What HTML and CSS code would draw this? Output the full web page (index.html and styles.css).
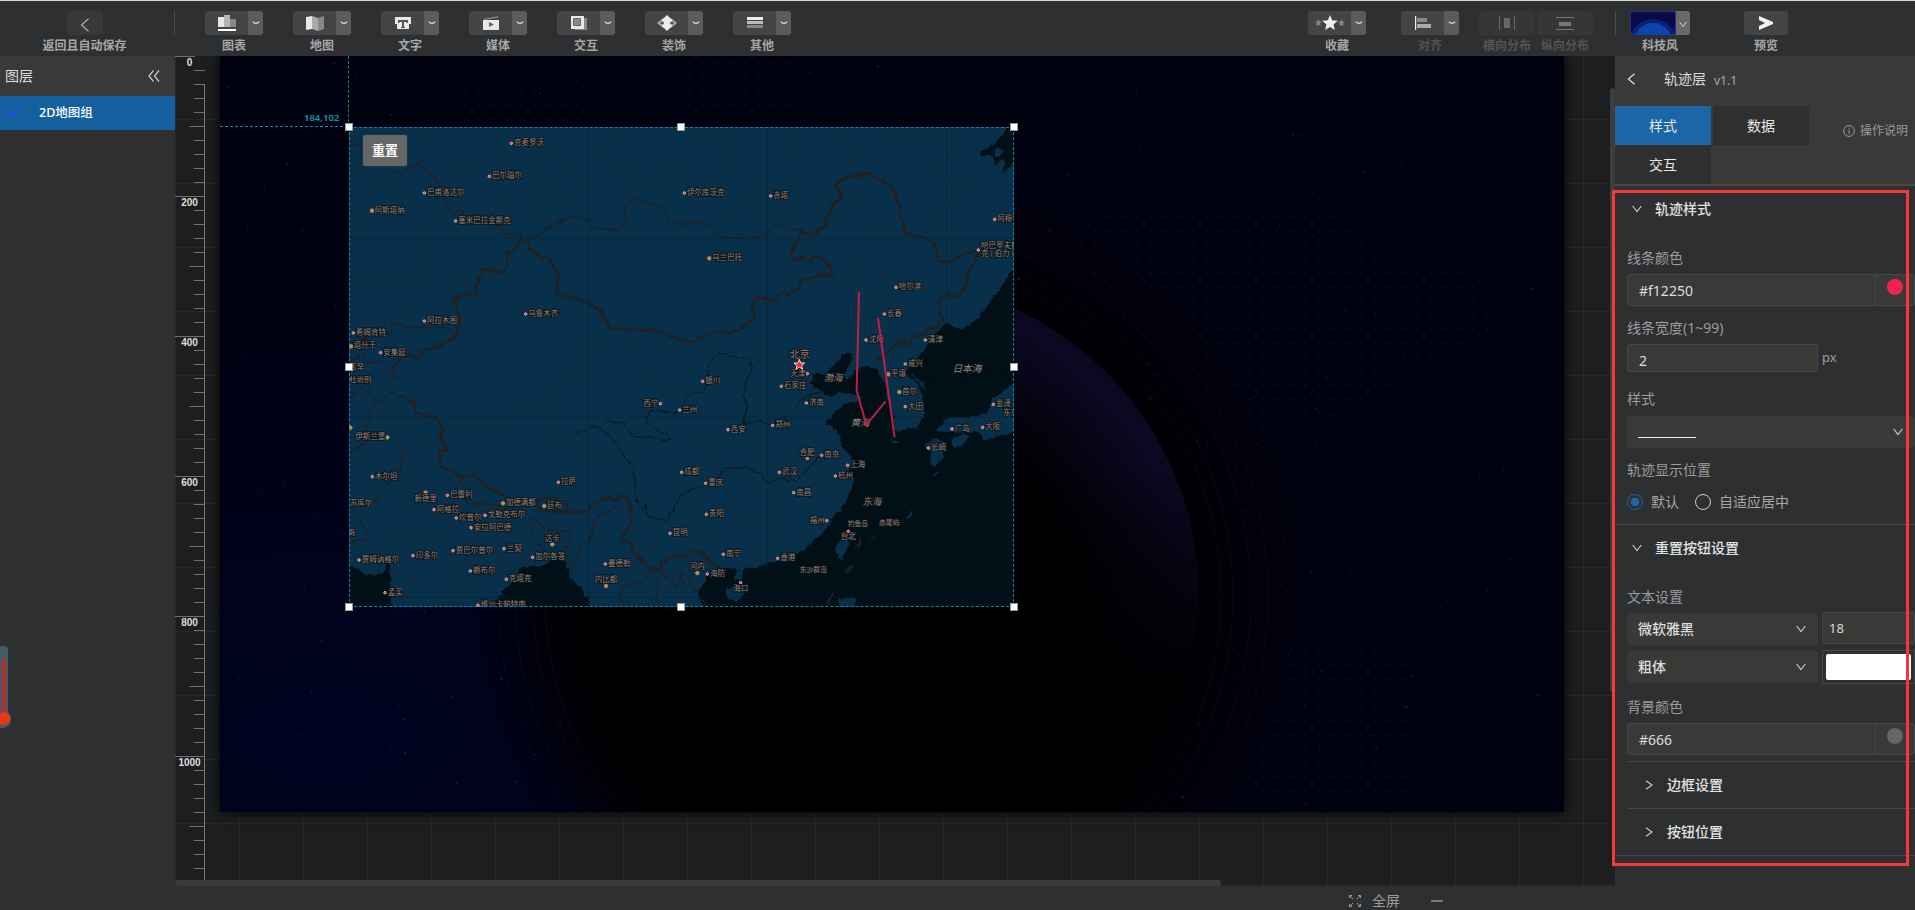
FILE: index.html
```html
<!DOCTYPE html>
<html lang="zh-CN">
<head>
<meta charset="utf-8">
<title>2D地图组</title>
<link rel="stylesheet" href="styles.css">
</head>
<body>
<svg class="defs" width="0" height="0">
  <symbol id="down" viewBox="0 0 10 8"><path d="M.7 1 5 6.6 9.3 1" fill="none" stroke="currentColor" stroke-width="1.2"/></symbol>
  <symbol id="caret" viewBox="0 0 8 4"><path d="M.8.8 Q4 4 7.2.8" fill="none" stroke="#d8d8d8" stroke-width="1.3"/></symbol>
</svg>
<div class="app">
  <header class="toolbar">
    <div class="back-zone"><div class="tool back"><span class="btn single"><svg width="10" height="14" viewBox="0 0 10 14"><path d="M8.5.8 1.5 7l7 6.2" fill="none" stroke="#aaa" stroke-width="1.3"/></svg></span><b>返回且自动保存</b></div></div>
    <div class="group">
      <div class="tool"><span class="btn"><i><svg width="18" height="18"><path fill="#e8e8e8" d="M0 3h6v10H0z"/><path fill="#b5b5b5" d="M6 1h6v12H6z"/><path fill="#888" d="M12 5h6v8h-6z"/><path fill="#fff" d="M0 15h18v2H0z"/></svg></i><u><svg width="8" height="4"><use href="#caret"/></svg></u></span><b>图表</b></div>
      <div class="tool"><span class="btn"><i><svg width="18" height="16"><path fill="#e8e8e8" d="m0 2 6-1v13l-6 1z"/><path fill="#aaa" d="m6 1 6 2v13l-6-2z"/><path fill="#888" d="m12 3 6-2v13l-6 2z"/></svg></i><u><svg width="8" height="4"><use href="#caret"/></svg></u></span><b>地图</b></div>
      <div class="tool"><span class="btn"><i><svg width="16" height="14"><path fill="#e8e8e8" d="M0 1h16v7H0zM2 8h12v5H2z"/><path fill="#555" d="M3 4h10v3h-1l-1-1H9v5h1v1H6v-1h1V6H5L4 7H3z"/></svg></i><u><svg width="8" height="4"><use href="#caret"/></svg></u></span><b>文字</b></div>
      <div class="tool"><span class="btn"><i><svg width="16" height="14"><path stroke="#999" d="M1 3.5 15.500.8"/><path fill="#e8e8e8" d="M0 4h16v10H0z"/><path fill="#666" d="m6 6 5 2.500-5 2.500z"/></svg></i><u><svg width="8" height="4"><use href="#caret"/></svg></u></span><b>媒体</b></div>
      <div class="tool"><span class="btn"><i><svg width="16" height="14"><path fill="#888" d="M4 2h12v12H4z"/><path fill="#e8e8e8" d="M0 0h13v13H0z"/><path fill="#888" stroke="#666" d="M2.500 2.500h7v7h-7z"/></svg></i><u><svg width="8" height="4"><use href="#caret"/></svg></u></span><b>交互</b></div>
      <div class="tool"><span class="btn"><i><svg width="20" height="16"><path fill="none" stroke="#aaa" stroke-width="2" d="M7 3.500 1.500 8 7 12.500M13 3.500 18.500 8 13 12.500"/><path fill="#eee" d="m10 0 2 2 3 3v6l-3 3-2 2-2-2-3-3V5l3-3z"/><circle cx="5.500" cy="8" r="1.500" fill="#555"/><circle cx="14.500" cy="8" r="1.500" fill="#555"/></svg></i><u><svg width="8" height="4"><use href="#caret"/></svg></u></span><b>装饰</b></div>
      <div class="tool"><span class="btn"><i><svg width="16" height="12"><path fill="#eee" d="M0 0h16v3H0z"/><path fill="#bbb" d="M0 4h16v3H0z"/><path fill="#888" d="M0 8h16v3H0z"/></svg></i><u><svg width="8" height="4"><use href="#caret"/></svg></u></span><b>其他</b></div>
    </div>
    <div class="group right">
      <div class="tool fav"><span class="btn"><i><svg width="30" height="16" viewBox="0 0 30 16"><path fill="#eee" d="m15 0 2.200 5.300 5.600.4-4.300 3.700 1.400 5.600-4.900-3-4.900 3 1.400-5.600-4.300-3.700 5.600-.4z"/><path fill="#888" d="m3.500 4 1 2.500 2.500.3-2 1.700.6 2.700-2.100-1.400-2.200 1.400.6-2.700-1.900-1.700 2.500-.3zM26.500 4l1 2.500 2.500.3-2 1.700.6 2.700-2.100-1.400-2.200 1.400.6-2.700-1.900-1.700 2.500-.3z"/></svg></i><u><svg width="8" height="4"><use href="#caret"/></svg></u></span><b>收藏</b></div>
      <div class="tool align"><span class="btn"><i><svg width="16" height="14"><path fill="#eee" d="M0 0h1.200v14H0z"/><path fill="#888" d="M2 2h10v4H2z"/><path fill="#aaa" d="M2 8h14v4H2z"/></svg></i><u><svg width="8" height="4"><use href="#caret"/></svg></u></span><b>对齐</b></div>
      <div class="tool dist"><span class="btn single"><svg width="16" height="14"><path fill="#666" d="M0 0h1v14H0zM5 2h6v10H5zM15 0h1v14h-1z"/></svg></span><b>横向分布</b></div>
      <div class="tool dist2"><span class="btn single"><svg width="18" height="13"><path fill="#777" d="M0 0h18v1H0zM3 5h12v4H3zM0 12h18v1H0z"/></svg></span><b>纵向分布</b></div>
      <span class="rule"></span>
      <div class="tool theme"><span class="btn"><em><svg width="45" height="23"><circle cx="22" cy="31" r="24" fill="#10349a" opacity=".5"/><circle cx="22" cy="30" r="19" fill="#0b45b0"/></svg></em><u><svg width="8" height="7" color="#ddd"><use href="#down"/></svg></u></span><b>科技风</b></div>
      <div class="tool preview"><span class="btn single"><svg width="14" height="14"><path fill="#f2f2f2" d="m0 0 14 6v2L0 14v-4l6-3-6-3z"/></svg></span><b>预览</b></div>
    </div>
  </header>

  <aside class="layers">
    <h2>图层<svg width="12" height="12" viewBox="0 0 12 12"><path d="M5.500.5 1 6l4.500 5.500M11 .5 6.500 6l4.500 5.500" fill="none" stroke="#ccc" stroke-width="1.200"/></svg></h2>
    <div class="layer"><svg width="14" height="12"><path d="M0 4 3 5l2 1 3-2 2-4 3 1-1 3-2 1-1 4-4 1-3-3z" fill="#2350d4"/></svg>2D地图组</div>
    <svg class="thermo" width="14" height="82"><path d="M-1 0h5a4 4 0 0 1 4 4v62a9.500 9.500 0 0 1-4 16h-5z" fill="#455a64"/><path d="M2.500 13h3v60h-3z" fill="#d02018"/><circle cx="4" cy="72.500" r="6.500" fill="#e23a14"/></svg>
  </aside>

  <main class="canvas">
    <div class="screen"><svg class="space" id="space" width="1344" height="756"></svg></div>
    <div class="ruler"><svg id="ruler" width="30" height="824"></svg></div>
    <span class="guide-v"></span><span class="guide-h"></span><span class="coord">184,102</span>
    <div class="widget">
      <svg id="map" width="665" height="480" viewBox="27 21 1995 1440">
        <defs><filter id="rough" x="0" y="0" width="1" height="1" filterUnits="objectBoundingBox" color-interpolation-filters="sRGB"><feTurbulence type="fractalNoise" baseFrequency=".06" numOctaves="2" seed="4"/><feDisplacementMap in="SourceGraphic" scale="16" xChannelSelector="R" yChannelSelector="G"/></filter></defs>
        <path fill="#08304a" d="M0 0h2100v1500H0z"/>
        <g filter="url(#rough)">
          <path fill="#08304a" d="M0 0h2100v1500H0z"/>
          <g class="sea">
            <path d="M2050 520 2015 565 1985 620 1950 665 1920 710 1880 740 1850 747 1820 725 1805 745 1782 760 1757 775 1755 810 1710 760 1685 765 1710 770 1735 795 1752 840 1752 885 1730 925 1675 932 1665 930 1660 880 1642 835 1640 800 1620 770 1612 745 1580 738 1550 748 1520 782 1508 765 1540 720 1535 700 1515 700 1495 725 1470 745 1460 765 1420 762 1412 790 1430 805 1450 812 1452 825 1480 828 1500 815 1540 822 1570 838 1520 850 1500 865 1470 890 1458 910 1480 925 1500 950 1508 985 1530 1005 1542 1030 1525 1055 1540 1075 1535 1105 1515 1150 1500 1170 1475 1200 1460 1225 1420 1265 1390 1290 1360 1310 1310 1325 1250 1340 1215 1345 1205 1375 1185 1385 1188 1345 1130 1345 1100 1370 1075 1420 1095 1490H2100z"/>
            <path d="M1757 775 1755 690 1782 640 1805 625 1820 605 1850 627 1880 620 1920 590 1950 545 1985 500 2050 400V760z"/>
            <path d="M1755 690 1710 740 1685 765 1712 760 1770 800z"/>
            <path d="M2050 0h-45l-15 40-30 35-40 20 5 13h35l5 30 20-20 12 8-10 35 60-60z"/>
            <path d="M0 1330 50 1345 75 1365 110 1365 135 1355 143 1325 152 1360 150 1410 162 1490H0zM450 1475 490 1410 540 1370 535 1350 570 1335 600 1340 640 1320 675 1322 690 1370 720 1400 745 1440 755 1480z"/>
          </g>
          <g fill="#08304a">
            <path d="M1180 1400 1215 1397 1210 1425 1190 1445 1160 1435 1157 1410zM1520 1255 1528 1265 1505 1328 1485 1290 1490 1270zM1495 1480 1495 1435 1545 1435 1545 1480zM1755 975 1780 955 1815 965 1810 1010 1785 1042 1768 1030 1775 1000zM1788 935 1820 895 1900 890 1940 880 1960 835 2050 770 2050 930 1980 945 1930 962 1925 940 1890 935zM1835 960 1870 940 1890 945 1870 975 1840 985z"/>
            <ellipse cx="1665" cy="965" rx="11" ry="6"/><path d="m1700 1190 20-20-2 15-15 15zM1588 1257l18-5-5 6zM1779 1065l12-14 3 6-10 12zM1734 987l14-2zM1965 88l15-6 8 12-12 16-12-4z"/>
          </g>
          <g class="thin dash">
            <path d="M28 160 70 158 100 180 160 180 170 250 80 295 40 325M170 120 175 180M160 210 230 215M250 470 265 350 250 340 300 270 360 235M28 495 170 497 200 470 275 468 270 440 400 490 410 520M170 497 180 550 230 600M205 40 280 30M435 30 470 50 490 120 425 130 360 125 320 165M480 120 530 130 520 220 430 280M600 90 650 90 665 150 640 220 600 240 590 180zM570 230 610 300 610 330M820 40 785 120 850 130 880 180 1040 140 1030 200 880 180M750 170 700 230 640 235M980 140 1050 150"/>
            <path d="M1040 60 1170 50 1150 160 1110 180 1040 300M1365 30 1370 80 1390 100 1310 160 1310 200 1160 250 1150 330M1260 280 1300 250 1360 260 1340 300zM1485 40 1530 80 1530 160 1510 190 1550 220 1570 270 1620 320 1630 370 1560 430 1570 500 1620 525 1730 550 1790 590M1610 30 1650 60 1850 70 1785 150 1820 180 1900 170 1890 220 1810 250 1790 340 1900 390"/>
            <path d="M230 945 310 950 370 890 500 890 650 870 655 830 630 780 720 760 720 700 790 660 850 640 890 720M620 865 620 950 710 980 800 1015 840 980 860 940 1000 990M890 720 980 840 1100 800 1250 660 1320 720 1310 790 1420 660 1500 630 1560 500M1060 730 1020 680M130 860 260 905 235 980 190 990 165 930zM205 1000 270 975 330 1000M150 1230 300 1250 400 1190 560 1270 500 1330 380 1400 270 1440M400 1220 360 1380 350 1440M580 1210 680 1330 610 1280M1040 1060 1160 1110 1190 1220 1310 1190 1310 1260 1250 1330M1170 780 1310 880 1230 970 1290 1040 1400 1000 1430 1120 1490 1140M1310 1190 1300 1100 1370 1060 1510 1090M1050 940 1160 990 1270 950M1380 820 1460 940M1130 1060 1130 1010 1060 980M1040 1120 1060 1240 1150 1250M1400 1140 1420 1210 1380 1280"/>
          </g>
          <g class="thin">
            <path d="M28 68 60 77 120 70M150 165 155 150 180 160 210 145 250 122 242 135 285 175 305 215 340 285 360 268 380 290 430 283 460 310 485 320 490 340 515 345 535 332 548 360 565 358 610 340 615 325 690 290 745 297 760 322 835 332 862 310 850 265 880 234 970 265 985 300 1020 315 1060 303 1100 310 1140 350 1220 358 1275 345 1310 312 1350 328 1385 332"/>
            <path d="M28 680 80 650 100 625 155 640 155 610 200 620 320 622 345 638M28 725 75 700 70 730 125 725 158 745M28 835 80 790 110 850 150 820 185 830M28 1000 75 970 90 870 110 850M28 1260 80 1262 85 1240 60 1205 30 1130M100 1145 140 1100 180 1050 185 1015 210 1000M370 1070 345 1110 390 1150 490 1155M570 1190 575 1240 620 1310M575 1190 620 1230 690 1235 675 1290 695 1360 710 1300 720 1270 745 1270 770 1190 830 1160M850 1461 835 1430 855 1400 915 1380 930 1350 950 1365 950 1440 970 1461M960 1350 1010 1400 1030 1360 1100 1460M1030 1400 1025 1350"/>
          </g>
          <g class="river"><path d="M710 937 735 932 760 917 790 930 830 975 870 1030 880 1050 885 1110 890 1145 910 1170 915 1150 925 1190 980 1202 1005 1160 1015 1135 1040 1115 1075 1105 1110 1090M1130 1080 1145 1055 1160 1044 1220 1043 1260 1060 1290 1090 1310 1075 1340 1080 1370 1080 1400 1055 1430 1015 1470 1005M800 905 850 908 880 950 930 950 965 960 995 958 970 940 925 915 917 890 930 870 1000 880 1035 862 1035 830 1090 815 1105 775 1102 740 1115 720 1140 697 1175 710 1230 715 1236 750 1215 790 1212 830 1220 860 1210 915 1250 903 1310 915 1345 880 1395 830 1450 812"/></g>
          <g class="thick"><path d="M560 360H540L528 387 502 400V440L480 457 427 446 407 505 413 523 390 520 340 538 350 550 360 605 345 652 285 684 250 690 238 712 195 708 170 725 158 745 165 778M185 828 225 850V873L258 890H285L310 930 300 950 320 990H295L305 1040 370 1070 400 1065 440 1100 500 1130M590 1145 610 1135 635 1133 668 1145 685 1175 740 1175 755 1155 790 1133 825 1140 845 1125 870 1150 875 1210 840 1260 875 1270 880 1300 905 1320 925 1340 960 1350 965 1325 1000 1310H1030L1060 1290 1085 1297 1105 1320 1135 1342M590 1145 600 1172 690 1177M560 360 570 385 600 410 630 415 655 465 648 520 660 528 725 537 760 562 778 565 808 625 900 630H955L1010 658 1035 660 1052 668 1120 635 1165 637 1200 628 1245 590 1235 560 1252 532 1300 543 1325 520H1350L1375 505 1382 483 1435 467H1478L1470 440 1440 410H1420L1405 427 1390 413 1365 422 1353 405 1370 365 1385 335 1420 345 1440 328 1460 320V300L1485 248 1502 235 1500 207 1482 200 1510 175 1580 160 1620 180 1655 195 1675 250 1680 280 1690 310 1700 343 1755 352 1785 375 1795 425H1840L1855 408 1915 392 1903 425 1885 460 1878 490 1855 533 1820 522 1795 543 1805 600 1785 625 1765 620 1755 640 1715 655 1710 675 1675 662 1655 690 1608 722M1560 1255 1552 1283M1537 1340 1515 1362M1482 1420 1465 1450"/></g>
        </g>
        <path d="M27 355h1995M27 892h1995M27 1432h1995M746 21v1440M1282 21v1440M1820 21v1440" stroke="#03202f" stroke-width="3" opacity=".5"/>
        <g id="cities"></g>
        <path d="M1378 718 1382 729 1394 729 1385 737 1388 748 1378 741 1368 748 1371 737 1362 729 1374 729z" fill="#f22" stroke="#fff" stroke-width="2.500"/>
        <path d="M1557 515 1550 812 1579 914 1637 844M1614 594 1664 952" fill="none" stroke="#c11d4b" stroke-width="6"/>
      </svg>
      <span class="reset">重置</span>
      <i class="h nw"></i><i class="h n"></i><i class="h ne"></i><i class="h w"></i><i class="h e"></i><i class="h sw"></i><i class="h s"></i><i class="h se"></i>
    </div>
    <span class="scroll-v"></span><span class="scroll-h"></span>
  </main>

  <aside class="panel">
    <div class="panel-top">
      <div class="panel-title"><svg width="9" height="12" viewBox="0 0 9 12"><path d="M7.500.8 1.500 6l6 5.200" fill="none" stroke="#ddd" stroke-width="1.300"/></svg><span>轨迹层</span><small>v1.1</small></div>
      <div class="tabs"><div class="tabset"><span class="tab on">样式</span><span class="tab">数据</span><span class="tab">交互</span></div>
        <div class="help"><svg width="12" height="12"><circle cx="6" cy="6" r="5.400" fill="none" stroke="#999"/><path d="M6 5v4M6 2.800v1.400" stroke="#999"/></svg>操作说明</div></div>
    </div>
    <section>
      <h3><svg width="10" height="8"><use href="#down"/></svg>轨迹样式</h3>
      <label class="l1">线条颜色</label>
      <div class="color"><span>#f12250</span><i><b class="red"></b></i></div>
      <label class="l2">线条宽度(1~99)</label>
      <div class="row"><span class="input num">2</span><span class="unit">px</span></div>
      <label class="l3">样式</label>
      <div class="select wide"><span class="stroke"></span><svg width="10" height="8"><use href="#down"/></svg></div>
      <label class="l4">轨迹显示位置</label>
      <div class="radios"><i class="on"></i><span>默认</span><i></i><span>自适应居中</span></div>
    </section>
    <section class="second">
      <h3><svg width="10" height="8"><use href="#down"/></svg>重置按钮设置</h3>
      <label class="l5">文本设置</label>
      <div class="row r1"><div class="select">微软雅黑<svg width="10" height="8"><use href="#down"/></svg></div><span class="input size">18</span></div>
      <div class="row r2"><div class="select">粗体<svg width="10" height="8"><use href="#down"/></svg></div><span class="swatch"><i></i></span></div>
      <label class="l6">背景颜色</label>
      <div class="color"><span>#666</span><i><b></b></i></div>
      <div class="fold first"><svg width="8" height="10"><path d="M1 .7 7 5 1 9.300" fill="none" stroke="currentColor" stroke-width="1.200"/></svg>边框设置</div>
      <div class="fold"><svg width="8" height="10"><path d="M1 .7 7 5 1 9.300" fill="none" stroke="currentColor" stroke-width="1.200"/></svg>按钮位置</div>
    </section>
  </aside>

  <footer class="status">
    <svg width="12" height="12"><path d="M.5 3V.5H3M.5.5l3.500 3.500M9 .5h2.500V3M11.500.5 8 4M.5 9v2.500H3M.5 11.500 4 8M9 11.500h2.500V9M11.500 11.500 8 8" fill="none" stroke="#999"/></svg><span>全屏</span><i></i>
  </footer>
</div>
<div class="highlight"></div>
<script src="app.js"></script>
</body>
</html>
```
FILE: styles.css
```css
* { box-sizing: border-box; }
body { margin: 0; background: #2e2f31; color: #ddd; font: 14px/20px "Noto Sans", "Noto Sans CJK SC", sans-serif; overflow: hidden; }
svg { display: block; flex: none; }
i, em { font-style: normal; }
u { text-decoration: none; }
.defs { position: absolute; }
.app { display: grid; grid-template: 56px 830px 24px / 175px 1440px 300px; width: 1915px; height: 910px; }

/* toolbar */
.toolbar { grid-column: 1 / 4; display: flex; border-top: 1px solid #d5dbd8; background: #2e2f31; padding-top: 10px; }
.back-zone { width: 175px; height: 24px; border-right: 1px solid #4b4c4e; display: flex; justify-content: center; }
.group { display: flex; margin-left: 30px; gap: 30px; }
.tool { width: 58px; display: flex; flex-direction: column; align-items: center; }
.tool > b { font-size: 12px; font-weight: 600; line-height: 20px; margin-top: 1px; color: #a6a7a7; white-space: nowrap; }
.back { width: 90px; margin-right: 5px; }
.btn { width: 100%; height: 24px; background: #434446; border-radius: 3px; display: flex; overflow: hidden; flex: none; }
.btn i { flex: 1; display: grid; place-items: center; }
.btn u { width: 15px; background: #5a5b5b; display: grid; place-items: center; }
.btn.single { justify-content: center; align-items: center; }
.back .btn { width: 36px; background: #373838; padding-top: 4px; }
.right { margin-left: 517px; gap: 0; }
.align { margin-left: 35px; }
.dist, .dist2 { width: 56px; margin-left: 20px; }
.dist2 { margin-left: 2px; }
.dist .btn, .dist2 .btn { background: #353638; }
.align > b, .dist > b, .dist2 > b { color: #535455; }
.rule { width: 1px; height: 24px; background: #4b4c4e; margin: 0 14px 0 22px; }
.theme { width: 60px; }
.btn em { width: 46px; background: #0a0a4a; border: 1px solid #24308a; border-radius: 3px; }
.theme .btn u { width: 14px; background: #68696a; padding-top: 3px; }
.preview { width: 44px; margin-left: 54px; }

/* layer list */
.layers { background: #2e2f31; position: relative; }
.layers h2 { margin: 0; height: 40px; padding: 0 15px 0 5px; background: #393a38; font: inherit; display: flex; align-items: center; justify-content: space-between; }
.layer { height: 34px; background: #14609f; color: #fff; font-size: 12.500px; font-weight: 500; display: flex; align-items: center; gap: 19px; padding-left: 6px; }
.thermo { position: absolute; left: 0; top: 590px; }

/* canvas */
.canvas { position: relative; overflow: hidden; background: #1d1e20; }
.screen { position: absolute; left: 45px; top: 0; width: 1344px; height: 756px; background: #00010f; box-shadow: 0 0 12px #000; }
.canvas::before { content: ""; position: absolute; inset: 0; background: repeating-linear-gradient(90deg, #27282a 0 1px, transparent 1px 64px), repeating-linear-gradient(#27282a 0 1px, transparent 1px 64px) 0 -1px; }
.ruler { position: absolute; left: 0; top: 0; font: bold 10px "Liberation Sans", sans-serif; }
.guide-v { position: absolute; left: 173px; top: 0; height: 71px; border-left: 1px dashed #0889a5; }
.guide-h { position: absolute; left: 45px; top: 70px; width: 128px; border-top: 1px dashed #0889a5; }
.coord { position: absolute; left: 129px; top: 54px; font: 600 9.500px/16px "Noto Sans", sans-serif; color: #0899b7; }
.widget { position: absolute; left: 174px; top: 71px; width: 665px; height: 480px; outline: 1px dashed #0889a5; outline-offset: -1px; }
.reset { position: absolute; left: 14px; top: 8px; width: 44px; height: 31px; border-radius: 2px; background: #666; color: #fff; font-weight: 700; font-size: 13px; line-height: 31px; text-align: center; box-shadow: 0 0 2px #444; }
.h { position: absolute; width: 8px; height: 8px; background: #fff; border: 1px solid #999; }
.nw, .n, .ne { top: -4px; } .w, .e { top: 236px; } .sw, .s, .se { top: 476px; }
.nw, .w, .sw { left: -4px; } .n, .s { left: 328px; } .ne, .e, .se { left: 661px; }
.scroll-v { position: absolute; right: 0; top: 32px; width: 5px; height: 604px; background: #3c3d3d; border-radius: 3px; }
.scroll-h { position: absolute; left: 0; bottom: 0; width: 1046px; height: 6px; background: #3c3c3c; border-radius: 3px; }
.sea { fill: #010f17; }
.thin { fill: none; stroke: #211f20; stroke-width: 4; }
.thin.dash { stroke-width: 3; stroke-dasharray: 6 5; stroke: #1b2932; }
.river { fill: none; stroke: #051621; stroke-width: 3; stroke-linejoin: round; }
.thick { fill: none; stroke: #211f20; stroke-width: 8; stroke-linejoin: round; }
#cities text { font-family: "Noto Sans CJK SC", sans-serif; font-size: 22.500px; fill: #8b8580; stroke: #101214; stroke-width: 5px; paint-order: stroke; }

/* property panel */
.panel { background: #2e2f31; overflow: hidden; }
.panel-top { height: 130px; background: #393a38; border-bottom: 2px solid #48494a; }
.panel-title { height: 50px; display: flex; align-items: center; padding: 0 0 4px 12px; }
.panel-title span { margin-left: 28px; }
.panel-title small { font-size: 12px; color: #aaa; margin: 4px 0 0 8px; }
.tabs { display: flex; }
.tabset { width: 194px; display: flex; flex-wrap: wrap; column-gap: 2px; }
.tab { width: 96px; height: 39px; background: #2e2f31; color: #e8e8e8; text-align: center; line-height: 39px; }
.tab.on { background: #1a66a6; }
.help { display: flex; align-items: center; gap: 5px; height: 20px; margin: 15px 0 0 34px; font-size: 12px; color: #999; white-space: nowrap; }
.panel section { padding-left: 12px; display: flex; flex-direction: column; }
.panel section > * { flex: none; }
h3 { margin: 13px 0 0 5px; font: inherit; font-weight: 500; display: flex; align-items: center; gap: 13px; height: 20px; color: #e2e2e2; }
h3 svg, .select svg, .fold svg { color: #ccc; }
label { height: 20px; color: #9b9c9c; }
.l1 { margin: 29px 0 6px; } .l2 { margin: 12px 0 6px; } .l3 { margin: 17px 0 7px; } .l4 { margin: 12px 0; }
.l5 { margin: 29px 0 6px; } .l6 { margin: 14px 0 6px; }
.color { height: 32px; width: 288px; display: flex; background: #393a38; border: 1px solid #444648; border-radius: 3px; padding-left: 11px; line-height: 31px; }
.color span { flex: 1; }
.color i { width: 39px; border-left: 1px solid #444648; padding: 4px 0 0 11px; }
.color b { display: block; width: 16px; height: 16px; border-radius: 50%; background: #666; }
.color .red { background: #f52250; }
.row { display: flex; gap: 4px; }
.input { background: #393a38; border: 1px solid #444648; border-radius: 3px; }
.num { width: 191px; height: 28px; padding-left: 11px; line-height: 32px; }
.unit { line-height: 26px; color: #9b9c9c; font-size: 13px; }
.select { width: 191px; height: 32px; background: #393a38; border-radius: 3px; display: flex; justify-content: space-between; align-items: center; padding: 0 12px 0 11px; font-weight: 500; }
.wide { width: 288px; }
.stroke { width: 58px; height: 1px; background: #eee; margin-top: 11px; }
.radios { display: flex; align-items: center; height: 20px; color: #a5a6a6; }
.radios i { width: 16px; height: 16px; border: 1px solid #ccc; border-radius: 50%; margin-right: 8px; }
.radios i.on { border-color: #1a66a6; background: radial-gradient(#1a66a6 0 4px, transparent 4.500px); }
.radios span + i { margin-left: 16px; }
.second { margin-top: 12px; border-top: 1px solid #444546; border-bottom: 1px solid #444546; }
.size { width: 93px; height: 32px; margin-top: -1px; padding-left: 6px; line-height: 30px; font-size: 13px; }
.r2 { margin-top: 6px; height: 32px; }
.swatch { width: 93px; height: 34px; margin-top: -1px; border: 1px solid #444648; padding: 3px; }
.swatch i { display: block; height: 26px; background: #fff; border-radius: 2px; }
.fold { height: 47px; border-top: 1px solid #444546; display: flex; align-items: center; gap: 14px; padding-left: 18px; color: #e2e2e2; font-weight: 500; }
.first { margin-top: 6px; }

.status { grid-column: 1 / 4; background: #2e2f31; display: flex; align-items: center; padding: 5px 0 0 1349px; color: #9b9c9c; }
.status span { margin-left: 11px; }
.status i { width: 12px; height: 2px; background: #77787a; margin-left: 31px; }
.highlight { position: absolute; left: 1612px; top: 190px; width: 297px; height: 676px; border: 3px solid #fb3638; }
```
FILE: app.js
```js
// Vertical ruler: one tick per 20 units, 0.7px per unit.
let ticks = '<path d="M29.500 28V824" stroke="#7b7c7d"/>';
for (let i = 0; i < 59; i++) {
  const y = i * 14 + 0.5;
  const x = i % 10 === 0 ? 0 : i % 5 === 0 ? 14 : 19;
  ticks += `<path d="M${x} ${y}H${i ? 30 : 20}" stroke="#707172"/>`;
  if (i % 10 === 0) ticks += `<text x="14.500" y="${y + 9.500}" fill="#ddd" text-anchor="middle">${i * 20}</text>`;
}
document.getElementById('ruler').innerHTML = ticks;

// Backdrop: glow, dotted continents, planet, rings and stars.
let seed = 7;
const rnd = () => (seed = (seed * 16807) % 2147483647) / 2147483647;
let s = `<defs>
<radialGradient id="blue" cx=".08" cy=".9" r=".75"><stop offset="0" stop-color="#000320"/><stop offset="1" stop-color="#00010e"/></radialGradient>
<radialGradient id="halo" cx=".5" cy=".5" r=".5"><stop offset=".76" stop-color="#000004"/><stop offset="1" stop-color="#000004" stop-opacity="0"/></radialGradient>
<radialGradient id="rim" cx=".42" cy=".58" r=".58"><stop offset=".72" stop-color="#000003"/><stop offset="1" stop-color="#0b0822"/></radialGradient>
<linearGradient id="shade" x1="0" y1="0" x2="0" y2="1"><stop offset=".3" stop-color="#000003" stop-opacity="0"/><stop offset=".62" stop-color="#000003"/></linearGradient>
<pattern id="dots" width="14" height="14" patternUnits="userSpaceOnUse"><circle cx="7" cy="7" r="1.700" fill="#050722"/></pattern></defs>
<rect width="1344" height="756" fill="url(#blue)"/>
<path fill="url(#dots)" d="M850 180l50-30h210l50 50 90 10 30 60-60 30-90 60-80 10-50 110-70 20-40-100 20-90zM1000 620l60-30h130v160h-150zM240 20h120v50h-120zM460 0h110v60h-110z"/>
<circle cx="663" cy="540" r="420" fill="url(#halo)"/>
<circle cx="663" cy="540" r="316" fill="url(#rim)"/><circle cx="663" cy="540" r="317" fill="url(#shade)"/>`;
for (const r of [338, 350, 368, 385]) s += `<circle cx="663" cy="540" r="${r}" fill="none" stroke="#141838" opacity=".35"/>`;
for (let i = 0; i < 520; i++) {
  const x = rnd() * 1344, y = rnd() * 756;
  if (Math.hypot(x - 663, y - 540) < 330) continue;
  s += `<circle cx="${x.toFixed(1)}" cy="${y.toFixed(1)}" r="${(0.5 + rnd() * 0.6).toFixed(2)}" fill="${x > 900 ? '#241640' : '#141c58'}" opacity="${(0.3 + rnd() * 0.7).toFixed(2)}"/>`;
}
document.getElementById('space').innerHTML = s;

// Places: x, y, name, side of the label (r, l, t, b), capital flag.
const cities = [
[514,70,'克麦罗沃'],[448,169,'巴尔瑙尔'],[253,219,'巴甫洛达尔'],[96,272,'阿斯塔纳','r',1],[347,303,'塞米巴拉金斯克'],[1033,219,'伊尔库茨克'],[253,603,'阿拉木图'],[557,582,'乌鲁木齐'],[40,639,'希姆肯特'],[33,679,'塔什干','r',1],[122,698,'安集延'],
[1292,228,'赤塔'],[1964,298,'阿穆尔'],[1108,415,'乌兰巴托','r',1],[1668,502,'哈尔滨'],[1633,582,'长春'],[1578,660,'沈阳'],[1756,660,'清津'],[1696,732,'咸兴'],[1645,763,'平壤','r',1],[1402,761,'天津','l'],
[961,851,'西宁','l'],[1019,870,'兰州'],[142,952,'伊斯兰堡','l',1],[31,923,'','r',1],[97,1070,'木尔坦'],[257,1118,'新德里','b',1],[322,1126,'巴雷利'],[282,1169,'阿格拉'],[489,1150,'加德满都','r',1],[613,1158,'廷布','r',1],[435,1186,'戈勒克布尔'],[349,1194,'坎普尔'],[393,1223,'安拉阿巴德'],[655,1087,'拉萨'],[1025,1057,'成都'],[990,1240,'昆明'],[637,1273,'达卡','t',1],[578,1312,'加尔各答'],[492,1286,'兰契'],[339,1292,'贾巴尔普尔'],[219,1307,'印多尔'],[57,1320,'贾姆讷格尔'],[391,1353,'赖布尔'],[499,1378,'克塔克'],[135,1418,'孟买'],[414,1456,'维沙卡帕特南'],[796,1332,'曼德勒'],[798,1398,'内比都','t',1],[1072,1359,'河内','t',1],
[1088,784,'银川'],[1324,799,'石家庄'],[1399,849,'济南'],[1298,916,'郑州'],[1164,929,'西安'],[1678,816,'首尔','r',1],[1696,860,'大田'],[1960,853,'金泽'],[1836,927,'广岛'],[1928,922,'大阪'],[1765,984,'长崎'],[1402,1015,'合肥','t'],[1445,1006,'南京'],[1523,1036,'上海'],[1486,1068,'杭州'],[1318,1057,'武汉'],[1097,1090,'重庆'],[1361,1118,'南昌'],[1099,1183,'贵阳'],[1460,1202,'福州','l'],[1525,1234,'台北','b'],[1313,1315,'香港'],[1150,1303,'南宁'],[1102,1362,'海防'],[1202,1388,'海口','b'],[1915,390,'']
];
let c = '';
for (const [x, y, name, side = 'r', cap] of cities) {
  c += `<circle cx="${x}" cy="${y}" r="${cap ? 5.5 : 4}" fill="${cap ? '#d98632' : '#f04a50'}" stroke="${cap ? '#a99a80' : '#e8c8cc'}" stroke-width="2"/>`;
  const p = { r: [8, 6, 'start'], l: [-6, 6, 'end'], t: [0, -11, 'middle'], b: [0, 24, 'middle'] }[side];
  c += `<text x="${x + p[0]}" y="${y + p[1]}" text-anchor="${p[2]}">${name}</text>`;
}
for (const [x, y, name, size, skew] of [[28,746,'苦罕',22,0],[28,787,'杜尚别',22,0],[30,1155,'苏库尔',22,0],[24,1244,'奇',22,0],[1923,384,'哈巴罗夫斯',22.5,0],[1923,407,'克 ( 伯力 )',22.5,0],[1990,886,'东京',22.5,0],[1523,1217,'钓鱼岛',20.5,0],[1617,1214,'赤尾屿',20.5,0],[1379,1355,'东沙群岛',20.5,0],[1349,713,'北京',30,0],[1452,782,'渤海',28,-12],[1838,757,'日本海',29,-12],[1533,917,'黄海',28,-12],[1568,1156,'东海',28,-12]])
  c += `<text transform="translate(${x} ${y}) skewX(${skew})" style="font-size:${size}px">${name}</text>`;
document.getElementById('cities').innerHTML = c;
```
